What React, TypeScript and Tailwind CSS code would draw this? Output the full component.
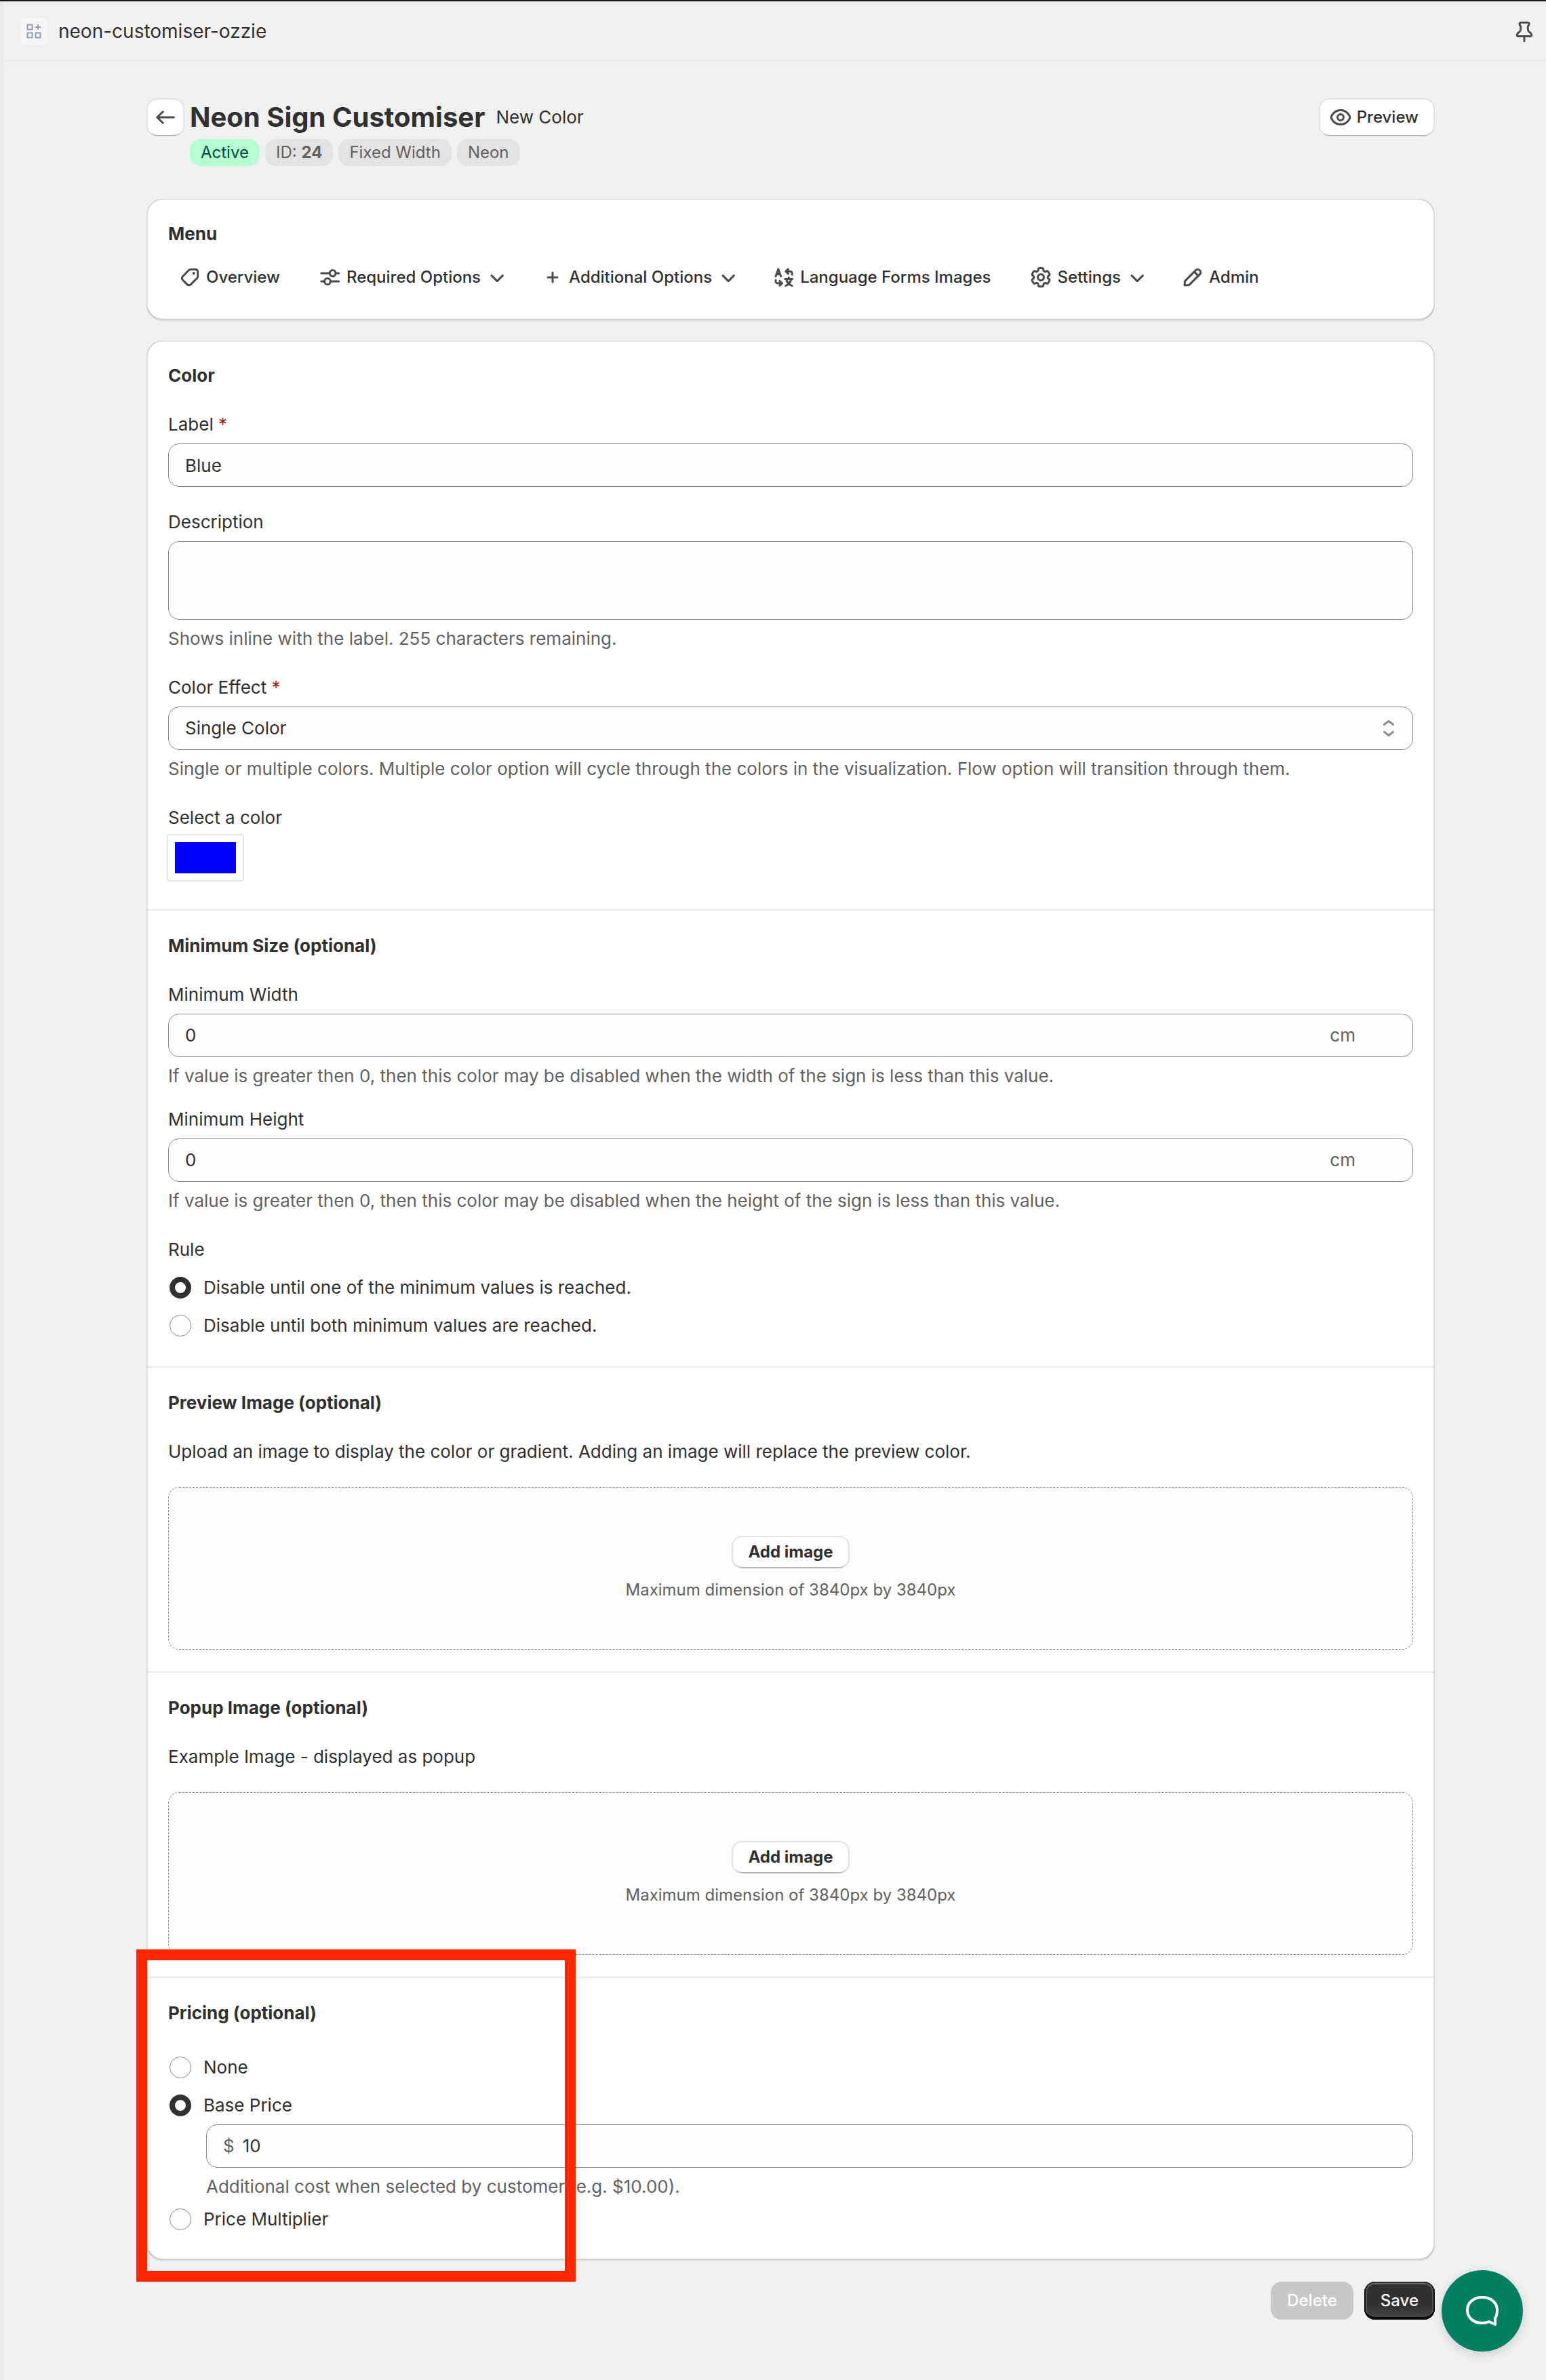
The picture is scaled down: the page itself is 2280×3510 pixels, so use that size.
import React from 'react';
import { HiOutlineCog6Tooth } from 'react-icons/hi2';

type IconProps = { children: React.ReactNode; className?: string };

const Icon = ({ children, className = 'size-10 text-[#4a4a4a]' }: IconProps) => (
  <svg
    viewBox="0 0 20 20"
    fill="none"
    stroke="currentColor"
    strokeWidth={1.5}
    strokeLinecap="round"
    strokeLinejoin="round"
    aria-hidden="true"
    className={`shrink-0 ${className}`}
  >
    {children}
  </svg>
);

const ArrowLeftIcon = () => (
  <Icon>
    <path d="M16.25 10H3.9M8.1 5.9 3.9 10l4.2 4.1" />
  </Icon>
);

const ViewIcon = () => (
  <Icon>
    <path d="M3.4 8.9C4.9 6.2 7.2 4.75 10 4.75s5.1 1.45 6.6 4.15c.4.7.4 1.5 0 2.2-1.5 2.7-3.8 4.15-6.6 4.15s-5.1-1.45-6.6-4.15c-.4-.7-.4-1.5 0-2.2Z" />
    <circle cx="10" cy="10" r="2.25" />
  </Icon>
);

const TagIcon = () => (
  <Icon>
    <path d="M10.9 4.15h3.2a1.75 1.75 0 0 1 1.75 1.75v3.2a2.5 2.5 0 0 1-.75 1.8l-4.5 4.4a1.75 1.75 0 0 1-2.5 0l-3.4-3.4a1.75 1.75 0 0 1 0-2.5l4.4-4.5a2.5 2.5 0 0 1 1.8-.75Z" />
    <circle cx="12.9" cy="7" r="1" fill="currentColor" stroke="none" />
  </Icon>
);

const SlidersIcon = () => (
  <Icon>
    <path d="M3.4 7h5.9M14.4 7h2M3.4 13h2M10.4 13h6" />
    <circle cx="11.8" cy="7" r="2.2" />
    <circle cx="8" cy="13" r="2.2" />
  </Icon>
);

const PlusIcon = () => (
  <Icon>
    <path d="M10 6.5v7M6.5 10h7" />
  </Icon>
);

const TranslateIcon = () => (
  <Icon>
    <path d="M4 9.2l1.9-5.3 1.9 5.3M4.7 7.7h2.4" />
    <path d="M13.2 3.9 11.4 5.6l1.8 1.7M11.8 5.6h2.9a1.4 1.4 0 0 1 1.4 1.4v1" />
    <path d="M6.9 12.6l1.8 1.8-1.8 1.7M8.4 14.4H5.4A1.4 1.4 0 0 1 4 13v-1" />
    <path d="M10.9 11.2h5.4M13.6 10v1.2M15.4 11.4c-.5 2.3-1.9 4-4 4.8M11.8 11.4c.5 2.3 1.9 4 4.2 4.8" />
  </Icon>
);

const SettingsIcon = () => (
  <span className="flex size-10 shrink-0 items-center justify-center text-[#4a4a4a]">
    <HiOutlineCog6Tooth size={36} strokeWidth={2} />
  </span>
);

const EditIcon = () => (
  <Icon>
    <path d="M4.1 15.9v-2.1c0-.6.2-1.1.6-1.5l7.5-7.5a2.08 2.08 0 0 1 3 3l-7.5 7.5c-.4.4-.9.6-1.5.6Z" />
    <path d="m11.4 6.2 2.6 2.6" />
  </Icon>
);

const ChevronDownIcon = () => (
  <Icon>
    <path d="M6 8.7l4.1 4.1 4.1-4.1" />
  </Icon>
);

const SelectIcon = () => (
  <Icon className="size-10 text-[#8a8a8a]">
    <path d="M6.7 7.3 10 4.7l3.3 2.6M6.7 12.7l3.3 2.6 3.3-2.6" />
  </Icon>
);

const PinIcon = () => (
  <Icon>
    <path d="M7.6 3.6h4.8c.7 0 1.1.5 1.1 1.1 0 1-.9 1.3-.9 2.5 0 3.4.9 3.1 1.9 4 .7.6.8 1.1.8 1.6 0 .6-.4 1-1 1H5.7c-.6 0-1-.4-1-1 0-.5.1-1 .8-1.6 1-.9 1.9-.6 1.9-4 0-1.2-.9-1.5-.9-2.5 0-.6.4-1.1 1.1-1.1Z" />
    <path d="M10 14.2v3" />
  </Icon>
);

const AppIcon = () => (
  <svg viewBox="0 0 40 40" fill="none" stroke="#919eab" strokeWidth={2} className="size-10 rounded-lg bg-[#f4f6f8]" aria-hidden="true">
    <rect x="10.5" y="10.5" width="7" height="7" />
    <rect x="10.5" y="22.5" width="7" height="7" />
    <rect x="22.5" y="22.5" width="7" height="7" />
    <path d="M26 10v8M22 14h8" />
  </svg>
);

const raised =
  'bg-white shadow-[inset_2px_0_0_#e3e3e3,inset_-2px_0_0_#e3e3e3,inset_0_2px_0_#e3e3e3,inset_0_-2px_0_#b5b5b5]';
const fieldBox = 'w-full rounded-2xl border border-[#8a8a8a] bg-[#fdfdfd]';

const Badge = ({ children, tone = 'bg-[#e3e3e3] text-[#616161]' }: { children: React.ReactNode; tone?: string }) => (
  <span className={`h-10 rounded-2xl px-4 text-2xl leading-10 ${tone}`}>{children}</span>
);

const Card = ({ children }: { children: React.ReactNode }) => (
  <section className="relative rounded-3xl bg-white shadow-[0_2px_0_rgba(26,26,26,0.07)]">
    {children}
    <div className="pointer-events-none absolute inset-0 rounded-3xl shadow-[inset_2px_0_0_rgba(0,0,0,0.13),inset_-2px_0_0_rgba(0,0,0,0.13),inset_0_-2px_0_rgba(0,0,0,0.17),inset_0_2px_0_rgba(204,204,204,0.5)]" />
  </section>
);

const Heading = ({ children }: { children: React.ReactNode }) => (
  <h2 className="text-[26px] leading-10 font-[650]">{children}</h2>
);

const MenuItem = ({ icon, label, menu }: { icon: React.ReactNode; label: string; menu?: boolean }) => (
  <button type="button" className={`flex h-14 items-center gap-1 rounded-2xl pl-3 text-2xl font-[550] ${menu ? 'pr-3' : 'pr-6'}`}>
    {icon}
    {label}
    {menu && <ChevronDownIcon />}
  </button>
);

type FieldProps = { id: string; label: string; required?: boolean; help?: string; children: React.ReactNode };

const Field = ({ id, label, required, help, children }: FieldProps) => (
  <div className="flex flex-col gap-2">
    <label htmlFor={id}>
      {label}
      {required && <span className="text-[#8e1f0b]"> *</span>}
    </label>
    {children}
    {help && <p className="text-[#616161]">{help}</p>}
  </div>
);

const SizeInput = ({ id }: { id: string }) => (
  <div className={`flex h-16 items-center pr-[84px] pl-6 ${fieldBox}`}>
    <input id={id} type="text" defaultValue="0" className="min-w-0 flex-1 bg-transparent outline-none" />
    <span className="text-[#616161]">cm</span>
  </div>
);

const Radio = ({ name, label, checked }: { name: string; label: string; checked?: boolean }) => (
  <label className="flex h-14 items-center gap-[18px] pl-[2px]">
    <input
      type="radio"
      name={name}
      defaultChecked={checked}
      className="size-8 shrink-0 appearance-none rounded-full border border-[#8a8a8a] bg-[#fdfdfd] checked:border-8 checked:border-[#303030] checked:bg-white"
    />
    {label}
  </label>
);

const DropZone = () => (
  <div className="flex h-60 flex-col items-center justify-center gap-3 rounded-2xl border border-dashed border-[#8a8a8a] bg-[#fdfdfd] pt-1">
    <button type="button" className={`h-12 rounded-2xl px-6 text-2xl font-[650] ${raised}`}>
      Add image
    </button>
    <p className="text-2xl leading-10 text-[#616161]">Maximum dimension of 3840px by 3840px</p>
  </div>
);

const App = () => (
  <div className="relative flex min-h-screen flex-col border-t-2 border-[#1a1a1a] bg-[#f1f1f1] font-['Inter',sans-serif] text-[26px] leading-10 font-[425] text-[#303030]">
    <div className="flex-1 border-l-[6px] border-[#ebebeb]">
      <header className="flex h-22 items-center justify-between border-t-2 border-b-2 border-[#ebebeb] pr-3 pl-6">
        <div className="flex items-center gap-4">
          <AppIcon />
          <span className="text-[28px]">neon-customiser-ozzie</span>
        </div>
        <button type="button" aria-label="Pin app">
          <PinIcon />
        </button>
      </header>

      <main className="pb-12 pl-[46px]">
        <div className="mx-auto max-w-[1900px] pt-[55px]">
          <div className="flex items-start justify-between">
            <div className="flex items-start gap-2">
              <button type="button" aria-label="Back" className={`flex size-14 items-center justify-center rounded-2xl ${raised}`}>
                <ArrowLeftIcon />
              </button>
              <div>
                <div className="flex h-14 items-center gap-4">
                  <h1 className="text-[40px] font-bold">Neon Sign Customiser</h1>
                  <span>New Color</span>
                </div>
                <div className="mt-1 flex gap-2">
                  <Badge tone="bg-[#b4fed2] text-[#014b40]">Active</Badge>
                  <Badge>
                    ID: <b>24</b>
                  </Badge>
                  <Badge>Fixed Width</Badge>
                  <Badge>Neon</Badge>
                </div>
              </div>
            </div>
            <button type="button" className={`flex h-14 items-center gap-1 rounded-2xl pr-6 pl-3 text-2xl font-[550] ${raised}`}>
              <ViewIcon />
              Preview
            </button>
          </div>

          <div className="mt-12 flex flex-col gap-[30px]">
            <Card>
              <div className="flex flex-col gap-4 p-8 pb-[35px]">
                <Heading>Menu</Heading>
                <nav className="flex flex-wrap gap-[18px]">
                  <MenuItem icon={<TagIcon />} label="Overview" />
                  <MenuItem icon={<SlidersIcon />} label="Required Options" menu />
                  <MenuItem icon={<PlusIcon />} label="Additional Options" menu />
                  <MenuItem icon={<TranslateIcon />} label="Language Forms Images" />
                  <MenuItem icon={<SettingsIcon />} label="Settings" menu />
                  <MenuItem icon={<EditIcon />} label="Admin" />
                </nav>
              </div>
            </Card>

            <Card>
              <form className="divide-y-2 divide-[#ebebeb]">
                <div className="flex flex-col gap-8 p-8">
                  <Heading>Color</Heading>
                  <Field id="label" label="Label" required>
                    <input id="label" type="text" defaultValue="Blue" className={`h-16 px-6 ${fieldBox}`} />
                  </Field>
                  <Field id="description" label="Description" help="Shows inline with the label. 255 characters remaining.">
                    <textarea id="description" className={`h-[116px] resize-none px-6 py-3 ${fieldBox}`} />
                  </Field>
                  <Field
                    id="effect"
                    label="Color Effect"
                    required
                    help="Single or multiple colors. Multiple color option will cycle through the colors in the visualization. Flow option will transition through them."
                  >
                    <div className="relative">
                      <select id="effect" className={`block h-16 appearance-none px-6 ${fieldBox}`}>
                        <option>Single Color</option>
                        <option>Multiple Colors</option>
                        <option>Flow</option>
                      </select>
                      <span className="pointer-events-none absolute inset-y-0 right-4 flex items-center">
                        <SelectIcon />
                      </span>
                    </div>
                  </Field>
                  <div className="flex flex-col items-start gap-[6px] pb-[11px]">
                    <label htmlFor="color">Select a color</label>
                    <input
                      id="color"
                      type="color"
                      defaultValue="#0000ff"
                      className="h-[66px] w-[110px] rounded-[2px] bg-white p-[10px] shadow-[0_0_0_2px_rgba(0,0,0,0.1)] [&::-webkit-color-swatch]:rounded-none [&::-webkit-color-swatch]:border-0 [&::-webkit-color-swatch-wrapper]:p-0"
                    />
                  </div>
                </div>

                <div className="p-8">
                  <Heading>Minimum Size (optional)</Heading>
                  <div className="mt-8 flex flex-col gap-6">
                    <Field
                      id="min-width"
                      label="Minimum Width"
                      help="If value is greater then 0, then this color may be disabled when the width of the sign is less than this value."
                    >
                      <SizeInput id="min-width" />
                    </Field>
                    <Field
                      id="min-height"
                      label="Minimum Height"
                      help="If value is greater then 0, then this color may be disabled when the height of the sign is less than this value."
                    >
                      <SizeInput id="min-height" />
                    </Field>
                  </div>
                  <fieldset className="mt-8">
                    <legend className="mb-2">Rule</legend>
                    <Radio name="rule" label="Disable until one of the minimum values is reached." checked />
                    <Radio name="rule" label="Disable until both minimum values are reached." />
                  </fieldset>
                </div>

                <div className="flex flex-col gap-8 p-8">
                  <Heading>Preview Image (optional)</Heading>
                  <p>Upload an image to display the color or gradient. Adding an image will replace the preview color.</p>
                  <DropZone />
                </div>

                <div className="flex flex-col gap-8 p-8">
                  <Heading>Popup Image (optional)</Heading>
                  <p>Example Image - displayed as popup</p>
                  <DropZone />
                </div>

                <div className="relative flex flex-col gap-8 p-8">
                  <Heading>Pricing (optional)</Heading>
                  <div>
                    <Radio name="pricing" label="None" />
                    <Radio name="pricing" label="Base Price" checked />
                    <div className="ml-14 flex flex-col gap-2">
                      <div className={`flex h-16 items-center gap-3 px-6 ${fieldBox}`}>
                        <span className="text-[#616161]">$</span>
                        <input type="text" aria-label="Base Price amount" defaultValue="10" className="min-w-0 flex-1 bg-transparent outline-none" />
                      </div>
                      <p className="text-[#616161]">Additional cost when selected by customer (e.g. $10.00).</p>
                    </div>
                    <Radio name="pricing" label="Price Multiplier" />
                  </div>
                  {/* red callout around the pricing options */}
                  <div className="pointer-events-none absolute -top-[42px] -left-[15px] z-10 h-[490px] w-[648px] border-16 border-[#ff2600]" />
                </div>
              </form>
            </Card>
          </div>

          <div className="mt-8 flex justify-end gap-4">
            <button type="button" disabled className="h-14 rounded-2xl bg-[#c8c8c8] px-6 text-2xl font-[550] text-white">
              Delete
            </button>
            <button
              type="button"
              className="h-14 rounded-2xl bg-linear-to-b from-[#303030] from-60% to-[#4a4a4a] px-6 text-2xl font-[550] text-white shadow-[inset_0_2px_0_#303030,inset_0_-4px_0_#0a0a0a,inset_2px_0_0_#0a0a0a,inset_-2px_0_0_#0a0a0a,inset_0_4px_0_#666,inset_4px_0_0_#555,inset_-4px_0_0_#555]"
            >
              Save
            </button>
          </div>
        </div>
      </main>
    </div>

    <button
      type="button"
      aria-label="Open chat"
      className="fixed right-[34px] bottom-[42px] flex size-[120px] items-center justify-center rounded-full bg-[#008060] shadow-[0_4px_16px_rgba(0,0,0,0.15)]"
    >
      <svg viewBox="0 0 48 44" fill="none" stroke="#fff" strokeWidth={4} strokeLinejoin="round" className="h-11 w-12" aria-hidden="true">
        <path d="M24 2C11 2 2 10 2 21s9 19 22 19c4 0 7-.6 10-2l9 4v-9c2-3 3-7 3-12C46 10 37 2 24 2Z" />
      </svg>
    </button>
  </div>
);

export default App;
